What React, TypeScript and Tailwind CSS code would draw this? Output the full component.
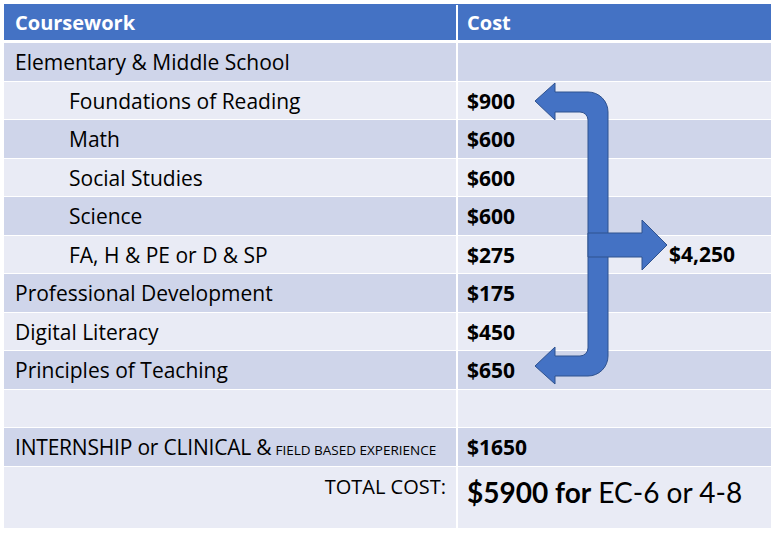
import React from 'react';

type Row = { label: string; cost: string; indent?: boolean; dark: boolean };

const rows: Row[] = [
  { label: 'Elementary & Middle School', cost: '', dark: true },
  { label: 'Foundations of Reading', cost: '$900', indent: true, dark: false },
  { label: 'Math', cost: '$600', indent: true, dark: true },
  { label: 'Social Studies', cost: '$600', indent: true, dark: false },
  { label: 'Science', cost: '$600', indent: true, dark: true },
  { label: 'FA, H & PE or D & SP', cost: '$275', indent: true, dark: false },
  { label: 'Professional Development', cost: '$175', dark: true },
  { label: 'Digital Literacy', cost: '$450', dark: false },
  { label: 'Principles of Teaching', cost: '$650', dark: true },
  { label: '', cost: '', dark: false },
];

const BracketArrow: React.FC = () => (
  <svg className="absolute left-0 top-0 pointer-events-none" width={776} height={535} viewBox="0 0 776 535">
    <path
      d="M535 101 L555 83 L555 92 L588 92 A20 20 0 0 1 608 112 L608 356 A20 20 0 0 1 588 376 L555 376 L555 384 L535 366 L555 347 L555 356 L580 356 A8 8 0 0 0 588 348 L588 120 A8 8 0 0 0 580 112 L555 112 L555 120 Z"
      fill="#4472C4"
      stroke="#2F528F"
      strokeWidth={1}
    />
    <path
      d="M588 233 L642 233 L642 220 L667 245 L642 270 L642 257 L588 257 Z"
      fill="#4472C4"
      stroke="#2F528F"
      strokeWidth={1}
    />
  </svg>
);

export default function App() {
  return (
    <div
      className="relative w-[776px] h-[535px] bg-white pt-[4px] pl-[4px] text-black"
      style={{ fontFamily: '"Open Sans", Lato, sans-serif' }}
    >
      <div className="w-[767px] flex flex-col">
        {/* Header */}
        <div className="flex h-[36px] bg-[#4472C4] text-white font-bold text-[20px] mb-[3px] pt-px">
          <div className="w-[452px] flex items-center pl-[11px]">Coursework</div>
          <div className="w-[2px] bg-white" />
          <div className="flex-1 flex items-center pl-[9px]">Cost</div>
        </div>

        {rows.map((r, i) => (
          <div
            key={i}
            className={`flex h-[37.5px] mb-px text-[21px] ${r.dark ? 'bg-[#CFD5EA]' : 'bg-[#E9EBF5]'}`}
          >
            <div className={`w-[452px] flex items-center pt-[2px] ${r.indent ? 'pl-[65px]' : 'pl-[11px]'}`}>{r.label}</div>
            <div className="w-[2px] bg-white" />
            <div className="flex-1 flex items-center pt-[2px] pl-[9px] font-bold">{r.cost}</div>
          </div>
        ))}

        {/* Internship */}
        <div className="flex h-[37.5px] mb-px bg-[#CFD5EA]">
          <div className="w-[452px] flex items-center pt-[2px] pl-[11px] text-[21px] tracking-[-0.2px]">
            INTERNSHIP or CLINICAL &amp;
            <span className="text-[13.5px] ml-[4px] mt-[4px] tracking-normal">FIELD BASED EXPERIENCE</span>
          </div>
          <div className="w-[2px] bg-white" />
          <div className="flex-1 flex items-center pt-[2px] pl-[9px] text-[21px] font-bold">$1650</div>
        </div>

        {/* Total */}
        <div className="flex h-[61.5px] bg-[#E9EBF5]">
          <div className="w-[452px] flex justify-end pr-[10px] pt-[5px] text-[20px]">TOTAL COST:</div>
          <div className="w-[2px] bg-white" />
          <div className="flex-1 pl-[9px] pt-[4px] text-[28px]" style={{ fontFamily: 'Lato, sans-serif' }}>
            <span className="font-bold">$5900 for</span> EC-6 or 4-8
          </div>
        </div>
      </div>

      <BracketArrow />
      <div className="absolute left-[669px] top-[241px] text-[21px] font-bold leading-[26px]">$4,250</div>
    </div>
  );
}
